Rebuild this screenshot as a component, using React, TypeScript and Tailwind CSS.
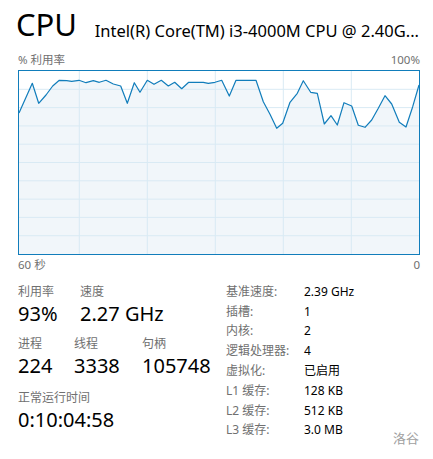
const points: [number, number][] = [
  [0, 42], [13.3, 12.3], [19.7, 32.3], [27, 24], [33.7, 15], [40.3, 9.3],
  [47.7, 9.7], [52.7, 10.3], [60, 9.3], [67, 11.7], [74.3, 9.7], [80.3, 11.3],
  [87, 9.3], [94.3, 13], [101.7, 15], [108.3, 32.3], [115.3, 11.7], [121, 21.3],
  [128.3, 9.3], [135, 13.3], [142.3, 9.3], [149.3, 15], [155.7, 11.3], [162.7, 17.7],
  [169.7, 11.3], [177.7, 11.3], [184.3, 11.3], [189.3, 12.3], [196, 11.3], [202.7, 9.3],
  [210.3, 25], [217, 9.3], [237, 9.3], [244.3, 30.7], [251, 43.3], [257.7, 57.3],
  [263.7, 52.3], [271, 31.3], [278.3, 22.3], [284.3, 9.7], [291.7, 21.3], [298.3, 22.3],
  [305.3, 53], [312, 44.7], [318.3, 54], [325, 31.7], [332.7, 35], [339.3, 54.3],
  [346, 56.3], [352.7, 49], [359.3, 37.3], [366, 24.7], [372.7, 33], [380.3, 51.3],
  [387, 56], [393.7, 35.7], [400, 14],
];

const W = 400;
const H = 183;

function CpuGraph() {
  const line = points.map(([x, y]) => `${x},${y}`).join(" ");
  const area = `0,${H} ${line} ${W},${H}`;
  const rows = [1, 2, 3, 4, 5, 6, 7, 8, 9].map((i) => (i * H) / 10);
  const cols = [60.3, 128.3, 196.3, 264.3, 332.3];

  return (
    <div className="ml-[18px] h-[185px] w-[402px] border border-[#117dbb] bg-white">
      <svg width={W} height={H} className="block">
        <polygon points={area} fill="#f1f6fa" />
        {rows.map((y) => (
          <line key={y} x1={0} x2={W} y1={y} y2={y} stroke="#d9eaf4" strokeWidth={1} />
        ))}
        {cols.map((x) => (
          <line key={x} x1={x} x2={x} y1={0} y2={H} stroke="#d9eaf4" strokeWidth={1} />
        ))}
        <polyline points={line} fill="none" stroke="#117dbb" strokeWidth={1.2} strokeLinejoin="round" />
      </svg>
    </div>
  );
}

function Stat({ label, value, className }: { label: string; value: string; className?: string }) {
  return (
    <div className={className}>
      <div className="h-[16px] text-[12px] leading-[16px] text-[#707070]">{label}</div>
      <div className="mt-[1px] h-[26px] text-[20px] leading-[26px] text-black">{value}</div>
    </div>
  );
}

const details: [string, string][] = [
  ["基准速度:", "2.39 GHz"],
  ["插槽:", "1"],
  ["内核:", "2"],
  ["逻辑处理器:", "4"],
  ["虚拟化:", "已启用"],
  ["L1 缓存:", "128 KB"],
  ["L2 缓存:", "512 KB"],
  ["L3 缓存:", "3.0 MB"],
];

export default function App() {
  return (
    <div
      className="relative h-[459px] w-[433px] overflow-hidden bg-white"
      style={{ fontFamily: '"Noto Sans", "Noto Sans CJK SC", sans-serif' }}
    >
      <div className="flex h-[50px] items-end pl-[16px] pr-[14px] pb-[6px]">
        <div className="text-[31px] leading-[40px] text-black">CPU</div>
        <div className="ml-auto truncate pb-[1px] text-[16.5px] leading-[24px] text-black">
          Intel(R) Core(TM) i3-4000M CPU @ 2.40G...
        </div>
      </div>
      <div className="flex h-[20px] items-center justify-between px-[18px] pr-[13px] text-[11.5px] text-[#707070]">
        <span>% 利用率</span>
        <span>100%</span>
      </div>
      <CpuGraph />
      <div className="flex h-[20px] items-center justify-between px-[18px] pr-[13px] text-[11.5px] text-[#707070]">
        <span>60 秒</span>
        <span>0</span>
      </div>

      <div className="mt-[9px] flex">
        <div className="w-[226px] pl-[18px]">
          <div className="flex">
            <Stat label="利用率" value="93%" className="w-[62px]" />
            <Stat label="速度" value="2.27 GHz" />
          </div>
          <div className="mt-[9px] flex">
            <Stat label="进程" value="224" className="w-[56px]" />
            <Stat label="线程" value="3338" className="w-[68px]" />
            <Stat label="句柄" value="105748" />
          </div>
          <div className="mt-[11px]">
            <Stat label="正常运行时间" value="0:10:04:58" />
          </div>
        </div>
        <div className="-mt-[2px] flex flex-col">
          {details.map(([k, v]) => (
            <div key={k} className="flex h-[19.8px] items-center text-[12px]">
              <span className="w-[78px] text-[#707070]">{k}</span>
              <span className="text-black">{v}</span>
            </div>
          ))}
        </div>
      </div>

      <div className="absolute left-[393px] top-[429px] text-[13px] text-[#a0a0a0]">洛谷</div>
    </div>
  );
}
